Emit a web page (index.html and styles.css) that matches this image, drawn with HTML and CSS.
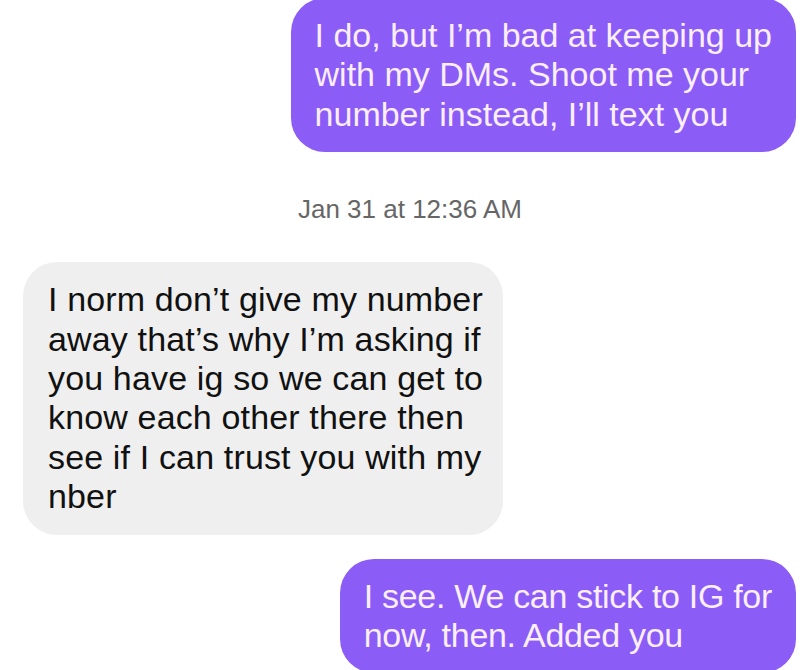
FILE: index.html
```html
<!DOCTYPE html>
<html lang="en">
<head>
  <meta charset="UTF-8">
  <meta name="viewport" content="width=device-width, initial-scale=1.0">
  <title>Messages</title>
  <link rel="stylesheet" href="styles.css">
</head>
<body>
  <div class="thread">
    <div class="row row-out first">
      <p class="bubble out">I do, but I’m bad at keeping up<br>with my DMs. Shoot me your<br>number instead, I’ll text you</p>
    </div>

    <div class="stamp">Jan 31 at 12:36 AM</div>

    <div class="row row-in">
      <p class="bubble in">I norm don’t give my number<br>away that’s why I’m asking if<br>you have ig so we can get to<br>know each other there then<br>see if I can trust you with my<br>nber</p>
    </div>

    <div class="row row-out last">
      <p class="bubble out tight">I see. We can stick to IG for<br>now, then. Added you</p>
    </div>
  </div>
</body>
</html>
```

FILE: styles.css
```css
body {
  margin: 0;
  background: #fff;
  font-family: "Liberation Sans", Arial, sans-serif;
  overflow: hidden;
}
.thread {
  display: flex;
  flex-direction: column;
  width: 800px;
}
.row {
  display: flex;
}
.row-out {
  justify-content: flex-end;
  padding-right: 4px;
}
.row-in {
  justify-content: flex-start;
  padding-left: 23px;
}
.first {
  margin-top: -2px;
}
.last {
  margin-top: 24px;
}
.bubble {
  margin: 0;
  padding: 18px 24px;
  font-size: 34px;
  line-height: 39.4px;
  border-radius: 34px;
}
.out {
  background: #8b5cf6;
  color: #fbeefd;
}
.tight {
  letter-spacing: -0.3px;
}
.in {
  background: #efefef;
  color: #111;
  padding-left: 25px;
  padding-right: 20px;
  letter-spacing: 0.15px;
}
.stamp {
  margin: 44px 0 40px;
  padding-left: 20px;
  text-align: center;
  font-size: 26px;
  line-height: 26px;
  color: #666;
}
```
